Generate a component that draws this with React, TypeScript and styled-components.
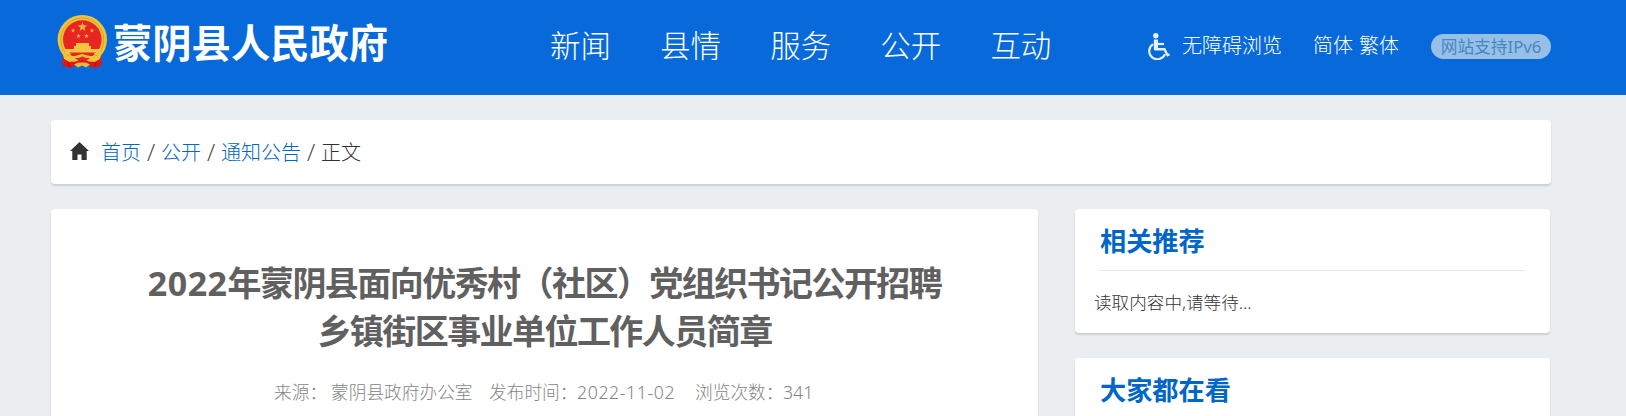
import React from "react";
import styled, { createGlobalStyle } from "styled-components";

const GlobalStyle = createGlobalStyle`
  * { box-sizing: border-box; }
  html, body { margin: 0; height: 100%; overflow: hidden; }
  body {
    background: #eaeef1;
    color: #333;
    font-family: "Noto Sans", "Noto Sans CJK SC", sans-serif;
    font-weight: 300;
  }
  a { color: inherit; text-decoration: none; }
`;

const Page = styled.div`
  width: 100%;
  height: 416px;
  overflow: hidden;
`;

const Header = styled.header`
  display: flex;
  height: 95px;
  padding-left: 56px;
  background: #086ada;
  color: #fff;
`;

const Brand = styled.div`
  display: flex;
  width: 494px;
  padding-top: 14px;
`;

const BrandName = styled.div`
  margin: -1px 0 0 5px;
  font-family: "Noto Sans CJK SC", sans-serif;
  font-size: 39.3px;
  font-weight: 700;
  line-height: 56px;
  white-space: nowrap;
`;

const Nav = styled.nav`
  display: flex;
  gap: 49.1px;
  width: 598px;
  font-family: "Noto Sans CJK SC", sans-serif;
  font-size: 30.5px;
  line-height: 88px;
  white-space: nowrap;
`;

const Tools = styled.div`
  display: flex;
  align-items: flex-start;
  padding-top: 30px;
  font-family: "Noto Sans CJK SC", sans-serif;
  font-size: 20px;
  line-height: 30px;
  white-space: nowrap;
`;

const AccessLink = styled.a`
  display: flex;
  width: 165px;
  gap: 12px;
`;

const LanguageLinks = styled.div`
  display: flex;
  width: 118px;
  gap: 6px;
`;

const Badge = styled.span`
  width: 120px;
  height: 25px;
  margin-top: 4px;
  border-radius: 13px;
  background: #98bfe6;
  color: #4488c6;
  font-family: "Noto Sans", "Noto Sans CJK SC", sans-serif;
  font-size: 16.7px;
  font-weight: 400;
  line-height: 26px;
  text-align: center;
`;

const Main = styled.main`
  width: 1500px;
  margin: 25px 0 0 51px;
`;

const Card = styled.section`
  border-radius: 4px;
  background: #fff;
  box-shadow: 0 2px 2px rgba(0, 0, 0, 0.13);
`;

const Breadcrumb = styled(Card)`
  display: flex;
  height: 64px;
  padding-left: 19px;
  font-family: "Noto Sans CJK SC", sans-serif;
  font-size: 20px;
  line-height: 64px;
`;

const HomeIcon = styled.svg`
  margin: 22px 12px 0 0;
`;

const Crumb = styled.a`
  color: #0066c8;
`;

const Slash = styled.span`
  width: 20px;
  color: #444;
  font-family: "Open Sans", sans-serif;
  font-size: 24px;
  text-align: center;
`;

const Columns = styled.div`
  display: flex;
  justify-content: space-between;
  align-items: flex-start;
  margin-top: 25px;
`;

const Article = styled(Card)`
  width: 987px;
  height: 260px;
  padding-top: 50px;
`;

const Title = styled.h1`
  margin: 0;
  color: #606060;
  font-size: 34px;
  font-weight: 700;
  letter-spacing: -1.56px;
  line-height: 48px;
  text-align: center;
`;

const Year = styled.span`
  letter-spacing: 0.5px;
`;

const Meta = styled.div`
  display: flex;
  margin-top: 25px;
  padding-left: 223px;
  color: #858585;
  font-size: 17.7px;
  line-height: 24px;
  white-space: nowrap;
`;

const MetaItem = styled.span<{ $width: number; $spacing?: number }>`
  width: ${(p) => p.$width}px;
  letter-spacing: ${(p) => p.$spacing ?? 0}px;
`;

const Aside = styled.aside`
  display: flex;
  flex-direction: column;
  gap: 25px;
  width: 475px;
  margin-right: 1px;
`;

const Panel = styled(Card)`
  height: 124px;
  padding: 0 25px;
`;

const PanelTitle = styled.h2`
  height: 62px;
  margin: 0;
  border-bottom: 1px solid #e7e7e7;
  color: #0066c8;
  font-family: "Noto Sans CJK SC", sans-serif;
  font-size: 26.2px;
  font-weight: 700;
  line-height: 63px;
`;

const PanelText = styled.p`
  margin: 18px 0 0 -6px;
  font-size: 17.6px;
  line-height: 26px;
`;

const sections = ["新闻", "县情", "服务", "公开", "互动"];
const path = ["首页", "公开", "通知公告"];

const Star = ({ x, y, r }: { x: number; y: number; r: number }) => {
  const points = Array.from({ length: 10 }, (_, i) => {
    const a = (Math.PI / 5) * i - Math.PI / 2;
    const d = i % 2 ? r * 0.42 : r;
    return `${x + d * Math.cos(a)},${y + d * Math.sin(a)}`;
  }).join(" ");
  return <polygon points={points} fill="#e9b53c" />;
};

const Emblem = () => (
  <svg width="52" height="56" viewBox="0 0 52 56">
    <path d="M7 40 L7 52 L15 54 L21 50 L31 50 L37 54 L45 52 L45 40Z" fill="#d81318" />
    <ellipse cx="26.3" cy="25.5" rx="24.7" ry="24.5" fill="#f2c238" />
    <ellipse cx="26.3" cy="25.5" rx="21.5" ry="21.5" fill="none" stroke="#d9a02a" strokeWidth="1" />
    <ellipse cx="26.3" cy="25.5" rx="19.3" ry="19.3" fill="#e82522" />
    <Star x={26.5} y={13} r={5} />
    <Star x={17} y={16.5} r={2.4} />
    <Star x={36} y={16.5} r={2.4} />
    <Star x={22.5} y={22} r={2.4} />
    <Star x={30.5} y={22} r={2.4} />
    <path d="M20 29h13v3h2v3h10l-2 5h-33l-2-5h10v-3h2z" fill="#f5c542" />
    <path d="M13 38.5h27l-7 4H20z" fill="#e82522" />
    <path d="M6 37 L11 42 L19 42 L26 40 L34 42 L41 42 L46 37 L44 45 L39 48 L32 47 L26 44.5 L21 47 L13 48 L8 45Z" fill="#f2c238" />
    <path d="M6 44 L13 48 L20 47.5 L26 45 L33 47.5 L39 48 L46 44 L45 52 L37 54 L32 50 L20 50 L15 54 L7 52Z" fill="#dc171b" />
    <path d="M19 44l3.500 0 4-1.500 4 1.500h3.500l-4 3-3.500-1.500-3.500 1.500z" fill="#e82522" />
    <path d="M18 50.500l4-2h8l4 2-4 3-4-2-4 2z" fill="#f0b52e" />
    <path d="M12 48l1.500 5M40 48l-1.500 5" stroke="#a90f13" strokeWidth="1" />
  </svg>
);

const Wheelchair = () => (
  <svg width="22" height="30" viewBox="0 0 22 30" fill="none" stroke="#e6f1ff">
    <circle cx="7.800" cy="5.700" r="2.700" fill="#e6f1ff" stroke="none" />
    <path d="M6.500 19.200h10l3 6 2-1" strokeWidth="2.400" />
    <path d="M7.900 9.500v10.500" strokeWidth="4.200" />
    <path d="M8 14h8" strokeWidth="2.200" />
    <path d="M5 14.200a8.200 8.200 0 1 0 12 10" strokeWidth="2.100" />
  </svg>
);

export default function App() {
  return (
    <Page>
      <GlobalStyle />
      <Header>
        <Brand>
          <Emblem />
          <BrandName>蒙阴县人民政府</BrandName>
        </Brand>
        <Nav>
          {sections.map((s) => (
            <a key={s} href="#">{s}</a>
          ))}
        </Nav>
        <Tools>
          <AccessLink href="#">
            <Wheelchair />
            <span>无障碍浏览</span>
          </AccessLink>
          <LanguageLinks>
            <a href="#">简体</a>
            <a href="#">繁体</a>
          </LanguageLinks>
          <Badge>网站支持IPv6</Badge>
        </Tools>
      </Header>
      <Main>
        <Breadcrumb>
          <HomeIcon width="19" height="18" viewBox="0 0 19 18">
            <path d="M9.500 0 L0 9 H2.300 V18 H7.500 V12.500 H11.500 V18 H16.700 V9 H19Z" fill="#333" />
          </HomeIcon>
          {path.map((p) => (
            <React.Fragment key={p}>
              <Crumb href="#">{p}</Crumb>
              <Slash>/</Slash>
            </React.Fragment>
          ))}
          <span>正文</span>
        </Breadcrumb>
        <Columns>
          <Article>
            <Title>
              <Year>2022</Year>年蒙阴县面向优秀村（社区）党组织书记公开招聘
              <br />
              乡镇街区事业单位工作人员简章
            </Title>
            <Meta>
              <MetaItem $width={57}>来源：</MetaItem>
              <MetaItem $width={158}>蒙阴县政府办公室</MetaItem>
              <MetaItem $width={88}>发布时间：</MetaItem>
              <MetaItem $width={118} $spacing={0.6}>2022-11-02</MetaItem>
              <MetaItem $width={88}>浏览次数：</MetaItem>
              <MetaItem $width={40}>341</MetaItem>
            </Meta>
          </Article>
          <Aside>
            <Panel>
              <PanelTitle>相关推荐</PanelTitle>
              <PanelText>读取内容中,请等待...</PanelText>
            </Panel>
            <Panel>
              <PanelTitle>大家都在看</PanelTitle>
            </Panel>
          </Aside>
        </Columns>
      </Main>
    </Page>
  );
}
